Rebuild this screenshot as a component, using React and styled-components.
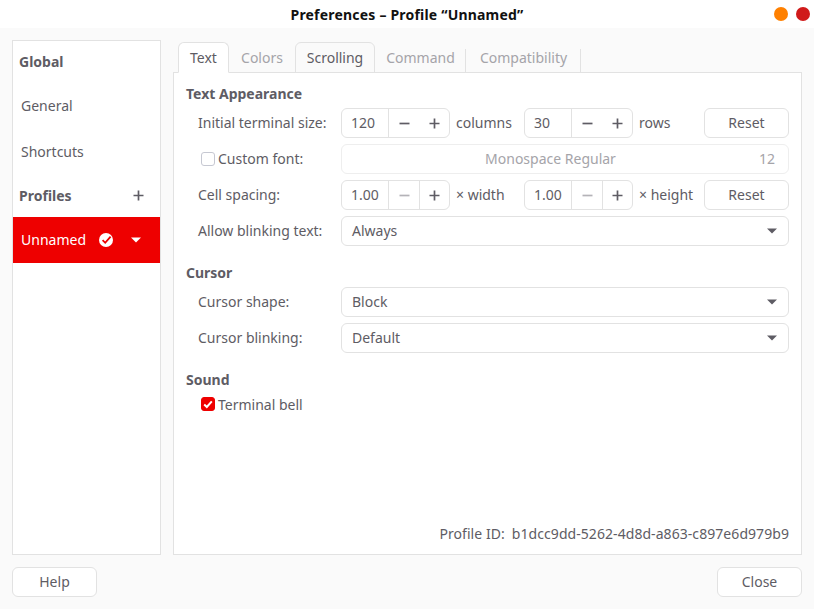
import React from 'react';
import styled, { createGlobalStyle } from 'styled-components';

const GlobalStyle = createGlobalStyle`
  html, body {
    margin: 0;
    padding: 0;
    background: #fafafa;
  }
  * {
    box-sizing: border-box;
  }
`;

const Window = styled.div`
  width: 814px;
  height: 609px;
  display: flex;
  flex-direction: column;
  background: #fafafa;
  color: #5e5c64;
  font-family: 'Noto Sans', 'Open Sans', sans-serif;
  font-size: 14px;
  overflow: hidden;
`;

const TitleBar = styled.header`
  height: 28px;
  flex: none;
  display: flex;
  align-items: center;
  justify-content: center;
  position: relative;
  background: #fff;
`;

const Title = styled.h1`
  margin: 0;
  font-size: 14px;
  font-weight: 700;
  letter-spacing: 0.2px;
  color: #111;
`;

const WindowButtons = styled.div`
  position: absolute;
  right: 4px;
  top: 7px;
  display: flex;
  gap: 8px;
`;

const Dot = styled.span`
  width: 14px;
  height: 14px;
  border-radius: 50%;
  background: ${(props) => props.color};
`;

const Body = styled.div`
  flex: 1;
  min-height: 0;
  display: flex;
  gap: 12px;
  padding: 12px 12px 0;
`;

const Sidebar = styled.nav`
  width: 149px;
  flex: none;
  display: flex;
  flex-direction: column;
  background: #fff;
  border: 1px solid #e2e2e2;
`;

const SideHead = styled.div`
  height: 42px;
  display: flex;
  align-items: center;
  justify-content: space-between;
  padding: 0 16px 1px 6px;
  font-weight: 700;
  color: #5e5c64;
`;

const SideItem = styled.div`
  height: 46px;
  display: flex;
  align-items: center;
  padding: 0 8px 2px;
`;

const ActiveItem = styled.div`
  height: 46px;
  display: flex;
  align-items: center;
  padding: 0 19px 0 8px;
  background: #ee0000;
  color: #fff;
`;

const ActiveName = styled.span`
  flex: 1;
  padding-bottom: 2px;
`;

const ActiveIcons = styled.span`
  display: flex;
  align-items: center;
  gap: 18px;
`;

const Main = styled.div`
  flex: 1;
  min-width: 0;
  display: flex;
  flex-direction: column;
`;

const Tabs = styled.div`
  height: 33px;
  flex: none;
  display: flex;
  align-items: flex-end;
  padding: 2px 0 0 5px;
  position: relative;
  margin-bottom: -1px;
`;

const Tab = styled.div`
  height: 31px;
  position: relative;
  display: flex;
  align-items: center;
  justify-content: center;
  width: ${(props) => props.$w}px;
  color: ${(props) => (props.$disabled ? '#a5a4a9' : '#5e5c64')};
  background: ${(props) => (props.$active ? '#fff' : 'transparent')};
  border: 1px solid ${(props) => (props.$framed ? '#e2e2e2' : 'transparent')};
  border-bottom-color: ${(props) => (props.$active ? '#fff' : '#e2e2e2')};
  border-radius: ${(props) => (props.$framed ? '6px 6px 0 0' : '0')};

  &::after {
    content: '';
    display: ${(props) => (props.$sep ? 'block' : 'none')};
    position: absolute;
    right: -1px;
    top: 6px;
    bottom: 0;
    width: 1px;
    background: #e2e2e2;
  }
`;

const Page = styled.section`
  flex: 1;
  min-height: 0;
  display: flex;
  flex-direction: column;
  background: #fff;
  border: 1px solid #e2e2e2;
  padding: 10px 12px 11px 12px;
`;

const SectionTitle = styled.h2`
  margin: 0;
  height: 20px;
  display: flex;
  align-items: center;
  font-size: 14px;
  font-weight: 700;
  color: #5e5c64;
`;

const Rows = styled.div`
  display: flex;
  flex-direction: column;
  gap: 6px;
  margin: 5px 0 16px;
`;

const Row = styled.div`
  height: 30px;
  display: flex;
  align-items: center;
  padding-left: 12px;
`;

const Label = styled.label`
  width: 143px;
  flex: none;
  padding-bottom: 1px;
  white-space: nowrap;
`;

const CheckLabel = styled(Label)`
  display: flex;
  align-items: center;
  gap: 3px;
  padding-left: 3px;
`;

const CheckRow = styled.div`
  height: 20px;
  display: flex;
  align-items: center;
  gap: 3px;
  margin: 5px 0 0 15px;
`;

const Box = styled.span`
  width: 14px;
  height: 14px;
  flex: none;
  display: flex;
  align-items: center;
  justify-content: center;
  border-radius: 3px;
  background: ${(props) => (props.$checked ? '#ee0000' : '#fff')};
  border: 1px solid ${(props) => (props.$checked ? '#ee0000' : '#c6c8d2')};
`;

const Spin = styled.div`
  width: 109px;
  height: 30px;
  flex: none;
  display: flex;
  border: 1px solid #e2e2e2;
  border-radius: 6px;
  background: #fff;
`;

const SpinValue = styled.span`
  flex: 1;
  display: flex;
  align-items: center;
  padding: 0 0 1px 9px;
`;

const SpinButton = styled.span`
  width: ${(props) => props.$w}px;
  flex: none;
  display: flex;
  align-items: center;
  justify-content: center;
  border-left: 1px solid ${(props) => (props.$line ? '#e2e2e2' : 'transparent')};
  color: ${(props) => (props.$disabled ? '#b4b3b8' : '#5e5c64')};
`;

const Unit = styled.span`
  flex: none;
  width: ${(props) => props.$w}px;
  margin-left: 6px;
  padding-bottom: 1px;
  white-space: nowrap;
`;

const Button = styled.button`
  height: 30px;
  width: ${(props) => props.$w}px;
  flex: none;
  margin-left: ${(props) => (props.$push ? 'auto' : '0')};
  border: 1px solid #e2e2e2;
  border-radius: 6px;
  background: #fff;
  color: #5e5c64;
  font: inherit;
  padding: 0 0 1px;
`;

const FontField = styled.div`
  flex: 1;
  height: 30px;
  display: flex;
  align-items: center;
  padding: 0 13px 1px 0;
  border: 1px solid #eeeeee;
  border-radius: 6px;
  background: #fff;
  color: #a5a4a9;
`;

const FontName = styled.span`
  flex: 1;
  text-align: center;
`;

const Select = styled.div`
  flex: 1;
  height: 30px;
  display: flex;
  align-items: center;
  justify-content: space-between;
  padding: 0 11px 0 10px;
  border: 1px solid #e2e2e2;
  border-radius: 6px;
  background: #fff;
`;

const SelectValue = styled.span`
  padding-bottom: 1px;
`;

const ProfileId = styled.div`
  margin-top: auto;
  display: flex;
  justify-content: flex-end;
  gap: 7px;
  height: 20px;
  align-items: center;
  letter-spacing: 0.06px;
`;

const Footer = styled.footer`
  height: 54px;
  flex: none;
  display: flex;
  align-items: center;
  justify-content: space-between;
  padding: 0 12px;
`;

const Plus = () => (
  <svg width="11" height="11" viewBox="0 0 11 11">
    <path d="M5.5 .5v10M.5 5.5h10" stroke="currentColor" strokeWidth="1.7" fill="none" />
  </svg>
);

const Minus = () => (
  <svg width="11" height="11" viewBox="0 0 11 11">
    <path d="M.5 5.5h10" stroke="currentColor" strokeWidth="1.7" fill="none" />
  </svg>
);

const Caret = ({ color = '#5e5c64' }) => (
  <svg width="10" height="6" viewBox="0 0 10 6">
    <path d="M0 0.5h10L5 5.5z" fill={color} />
  </svg>
);

const Tick = () => (
  <svg width="10" height="9" viewBox="0 0 10 9">
    <path d="M1.2 4.6 3.8 7 8.8 1.4" stroke="#fff" strokeWidth="2" fill="none" />
  </svg>
);

const DefaultBadge = () => (
  <svg width="14" height="14" viewBox="0 0 14 14">
    <circle cx="7" cy="7" r="7" fill="#fff" />
    <path d="M3.6 7.2 6.2 9.8 11.6 3.6" stroke="#ee0000" strokeWidth="1.8" fill="none" />
  </svg>
);

const Spinner = ({ value, minusDisabled }) => (
  <Spin>
    <SpinValue>{value}</SpinValue>
    <SpinButton $w={31} $line $disabled={minusDisabled}>
      <Minus />
    </SpinButton>
    <SpinButton $w={30} $line={minusDisabled}>
      <Plus />
    </SpinButton>
  </Spin>
);

const Dropdown = ({ value }) => (
  <Select>
    <SelectValue>{value}</SelectValue>
    <Caret />
  </Select>
);

const App = () => (
  <Window>
    <GlobalStyle />
    <TitleBar>
      <Title>Preferences – Profile “Unnamed”</Title>
      <WindowButtons>
        <Dot color="#ff8000" />
        <Dot color="#d01a1a" />
      </WindowButtons>
    </TitleBar>
    <Body>
      <Sidebar>
        <SideHead>Global</SideHead>
        <SideItem>General</SideItem>
        <SideItem>Shortcuts</SideItem>
        <SideHead>
          Profiles
          <Plus />
        </SideHead>
        <ActiveItem>
          <ActiveName>Unnamed</ActiveName>
          <ActiveIcons>
            <DefaultBadge />
            <Caret color="#fff" />
          </ActiveIcons>
        </ActiveItem>
      </Sidebar>
      <Main>
        <Tabs>
          <Tab $w={51} $active $framed>Text</Tab>
          <Tab $w={66} $disabled>Colors</Tab>
          <Tab $w={80} $framed>Scrolling</Tab>
          <Tab $w={91} $disabled $sep>Command</Tab>
          <Tab $w={115} $disabled $sep>Compatibility</Tab>
        </Tabs>
        <Page>
          <SectionTitle>Text Appearance</SectionTitle>
          <Rows>
            <Row>
              <Label>Initial terminal size:</Label>
              <Spinner value="120" />
              <Unit $w={68}>columns</Unit>
              <Spinner value="30" />
              <Unit $w={50}>rows</Unit>
              <Button $w={85} $push>Reset</Button>
            </Row>
            <Row>
              <CheckLabel>
                <Box />
                Custom font:
              </CheckLabel>
              <FontField>
                <FontName>Monospace Regular</FontName>
                12
              </FontField>
            </Row>
            <Row>
              <Label>Cell spacing:</Label>
              <Spinner value="1.00" minusDisabled />
              <Unit $w={68}>× width</Unit>
              <Spinner value="1.00" minusDisabled />
              <Unit $w={60}>× height</Unit>
              <Button $w={85} $push>Reset</Button>
            </Row>
            <Row>
              <Label>Allow blinking text:</Label>
              <Dropdown value="Always" />
            </Row>
          </Rows>
          <SectionTitle>Cursor</SectionTitle>
          <Rows>
            <Row>
              <Label>Cursor shape:</Label>
              <Dropdown value="Block" />
            </Row>
            <Row>
              <Label>Cursor blinking:</Label>
              <Dropdown value="Default" />
            </Row>
          </Rows>
          <SectionTitle>Sound</SectionTitle>
          <CheckRow>
            <Box $checked>
              <Tick />
            </Box>
            Terminal bell
          </CheckRow>
          <ProfileId>
            <span>Profile ID:</span>
            <span>b1dcc9dd-5262-4d8d-a863-c897e6d979b9</span>
          </ProfileId>
        </Page>
      </Main>
    </Body>
    <Footer>
      <Button $w={85}>Help</Button>
      <Button $w={85}>Close</Button>
    </Footer>
  </Window>
);

export default App;
